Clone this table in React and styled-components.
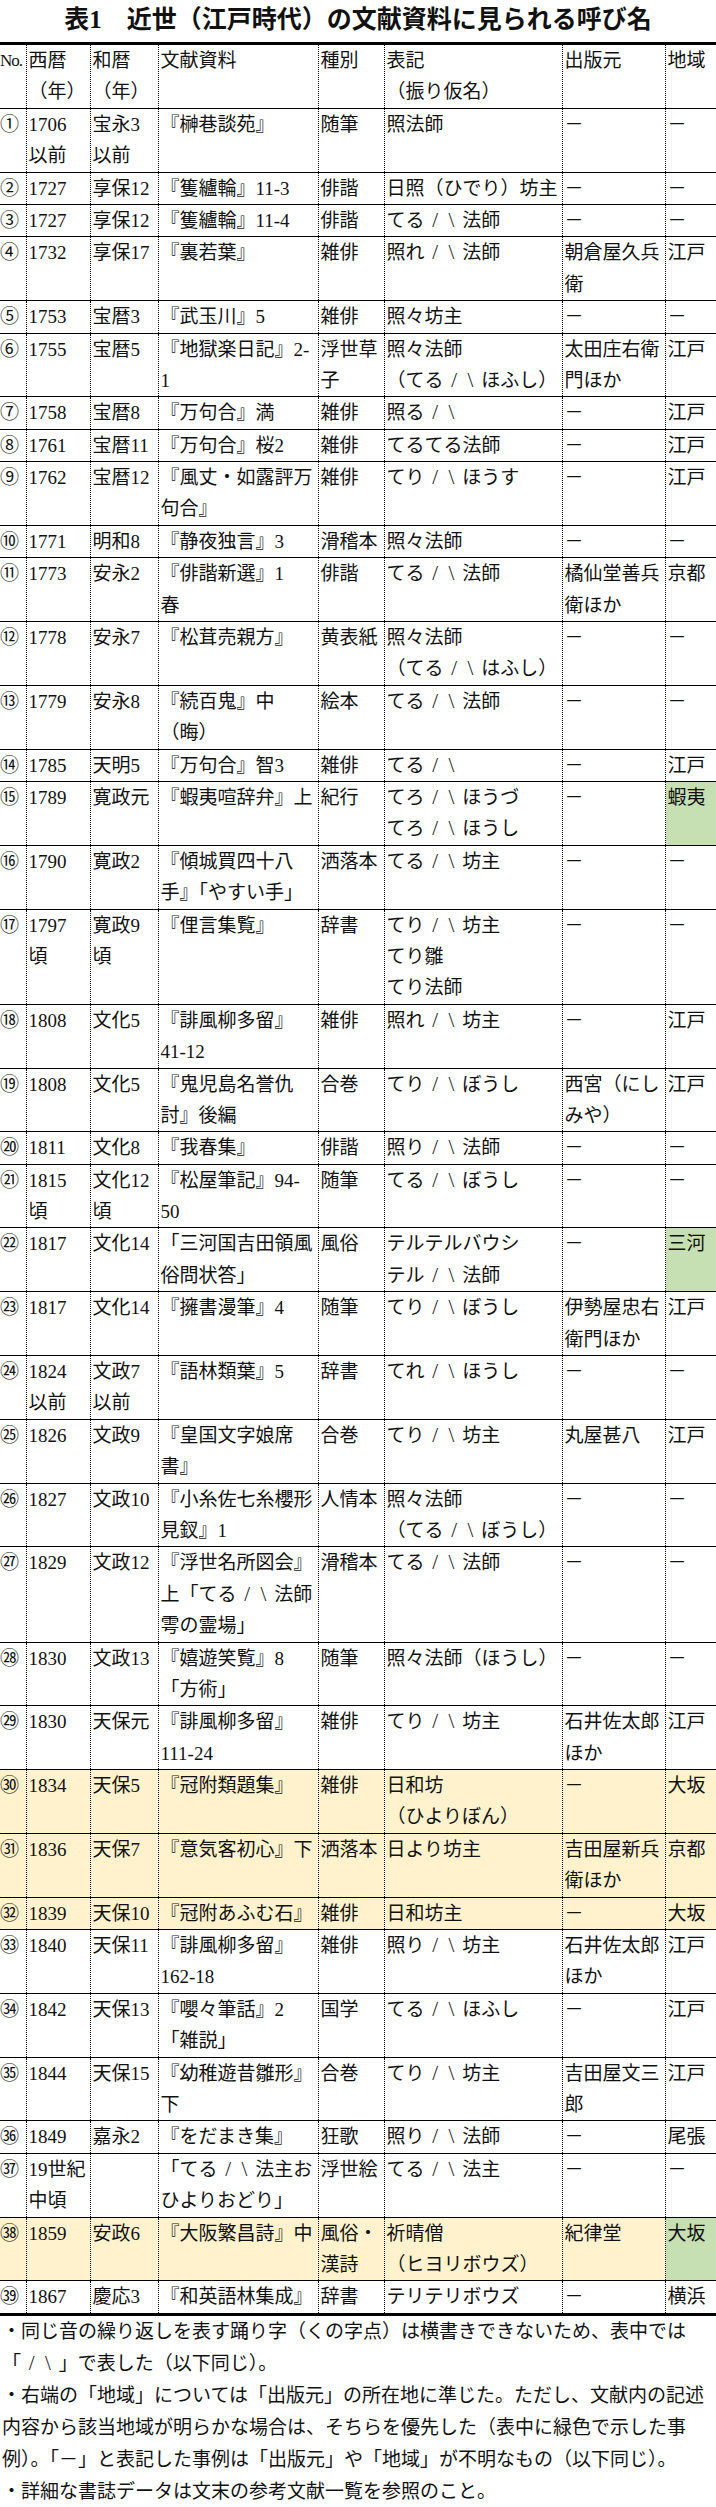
import React from "react";
import styled, { createGlobalStyle } from "styled-components";

const GlobalStyle = createGlobalStyle`
  body {
    margin: 0;
    background: #fff;
    color: #111;
    font-family: "Liberation Serif", "Noto Sans CJK JP", serif;
  }
`;

const columns = [26, 64, 68, 160, 66, 178, 103, 51];

const header = [
  "No.",
  "西暦\n（年）",
  "和暦\n（年）",
  "文献資料",
  "種別",
  "表記\n（振り仮名）",
  "出版元",
  "地域",
];

// no, west, wareki, source, kind, label, publisher, region, tone
const rows = [
  ["①", "1706\n以前", "宝永3\n以前", "『榊巷談苑』", "随筆", "照法師", "－", "－"],
  ["②", "1727", "享保12", "『篗纑輪』11-3", "俳諧", "日照（ひでり）坊主", "－", "－"],
  ["③", "1727", "享保12", "『篗纑輪』11-4", "俳諧", "てる／＼法師", "－", "－"],
  ["④", "1732", "享保17", "『裏若葉』", "雑俳", "照れ／＼法師", "朝倉屋久兵\n衛", "江戸"],
  ["⑤", "1753", "宝暦3", "『武玉川』5", "雑俳", "照々坊主", "－", "－"],
  ["⑥", "1755", "宝暦5", "『地獄楽日記』2-\n1", "浮世草\n子", "照々法師\n（てる／＼ほふし）", "太田庄右衛\n門ほか", "江戸"],
  ["⑦", "1758", "宝暦8", "『万句合』満", "雑俳", "照る／＼", "－", "江戸"],
  ["⑧", "1761", "宝暦11", "『万句合』桜2", "雑俳", "てるてる法師", "－", "江戸"],
  ["⑨", "1762", "宝暦12", "『風丈・如露評万\n句合』", "雑俳", "てり／＼ほうす", "－", "江戸"],
  ["⑩", "1771", "明和8", "『静夜独言』3", "滑稽本", "照々法師", "－", "－"],
  ["⑪", "1773", "安永2", "『俳諧新選』1\n春", "俳諧", "てる／＼法師", "橘仙堂善兵\n衛ほか", "京都"],
  ["⑫", "1778", "安永7", "『松茸売親方』", "黄表紙", "照々法師\n（てる／＼はふし）", "－", "－"],
  ["⑬", "1779", "安永8", "『続百鬼』中\n（晦）", "絵本", "てる／＼法師", "－", "－"],
  ["⑭", "1785", "天明5", "『万句合』智3", "雑俳", "てる／＼", "－", "江戸"],
  ["⑮", "1789", "寛政元", "『蝦夷喧辞弁』上", "紀行", "てろ／＼ほうづ\nてろ／＼ほうし", "－", "蝦夷", "green"],
  ["⑯", "1790", "寛政2", "『傾城買四十八\n手』「やすい手」", "洒落本", "てる／＼坊主", "－", "－"],
  ["⑰", "1797\n頃", "寛政9\n頃", "『俚言集覧』", "辞書", "てり／＼坊主\nてり雛\nてり法師", "－", "－"],
  ["⑱", "1808", "文化5", "『誹風柳多留』\n41-12", "雑俳", "照れ／＼坊主", "－", "江戸"],
  ["⑲", "1808", "文化5", "『鬼児島名誉仇\n討』後編", "合巻", "てり／＼ぼうし", "西宮（にし\nみや）", "江戸"],
  ["⑳", "1811", "文化8", "『我春集』", "俳諧", "照り／＼法師", "－", "－"],
  ["㉑", "1815\n頃", "文化12\n頃", "『松屋筆記』94-\n50", "随筆", "てる／＼ぼうし", "－", "－"],
  ["㉒", "1817", "文化14", "「三河国吉田領風\n俗問状答」", "風俗", "テルテルバウシ\nテル／＼法師", "－", "三河", "green"],
  ["㉓", "1817", "文化14", "『擁書漫筆』4", "随筆", "てり／＼ぼうし", "伊勢屋忠右\n衛門ほか", "江戸"],
  ["㉔", "1824\n以前", "文政7\n以前", "『語林類葉』5", "辞書", "てれ／＼ほうし", "－", "－"],
  ["㉕", "1826", "文政9", "『皇国文字娘席\n書』", "合巻", "てり／＼坊主", "丸屋甚八", "江戸"],
  ["㉖", "1827", "文政10", "『小糸佐七糸櫻形\n見釵』1", "人情本", "照々法師\n（てる／＼ぼうし）", "－", "－"],
  ["㉗", "1829", "文政12", "『浮世名所図会』\n上「てる／＼法師\n雩の霊場」", "滑稽本", "てる／＼法師", "－", "－"],
  ["㉘", "1830", "文政13", "『嬉遊笑覧』8\n「方術」", "随筆", "照々法師（ほうし）", "－", "－"],
  ["㉙", "1830", "天保元", "『誹風柳多留』\n111-24", "雑俳", "てり／＼坊主", "石井佐太郎\nほか", "江戸"],
  ["㉚", "1834", "天保5", "『冠附類題集』", "雑俳", "日和坊\n（ひよりぼん）", "－", "大坂", "cream"],
  ["㉛", "1836", "天保7", "『意気客初心』下", "洒落本", "日より坊主", "吉田屋新兵\n衛ほか", "京都", "cream"],
  ["㉜", "1839", "天保10", "『冠附あふむ石』", "雑俳", "日和坊主", "－", "大坂", "cream"],
  ["㉝", "1840", "天保11", "『誹風柳多留』\n162-18", "雑俳", "照り／＼坊主", "石井佐太郎\nほか", "江戸"],
  ["㉞", "1842", "天保13", "『嚶々筆話』2\n「雑説」", "国学", "てる／＼ほふし", "－", "江戸"],
  ["㉟", "1844", "天保15", "『幼稚遊昔雛形』\n下", "合巻", "てり／＼坊主", "吉田屋文三\n郎", "江戸"],
  ["㊱", "1849", "嘉永2", "『をだまき集』", "狂歌", "照り／＼法師", "－", "尾張"],
  ["㊲", "19世紀\n中頃", "", "「てる／＼法主お\nひよりおどり」", "浮世絵", "てる／＼法主", "－", "－"],
  ["㊳", "1859", "安政6", "『大阪繁昌詩』中", "風俗・\n漢詩", "祈晴僧\n（ヒヨリボウズ）", "紀律堂", "大坂", "both"],
  ["㊴", "1867", "慶応3", "『和英語林集成』", "辞書", "テリテリボウズ", "－", "横浜"],
];

const notes = [
  "・同じ音の繰り返しを表す踊り字（くの字点）は横書きできないため、表中では",
  "「／＼」で表した（以下同じ）。",
  "・右端の「地域」については「出版元」の所在地に準じた。ただし、文献内の記述",
  "内容から該当地域が明らかな場合は、そちらを優先した（表中に緑色で示した事",
  "例）。「－」と表記した事例は「出版元」や「地域」が不明なもの（以下同じ）。",
  "・詳細な書誌データは文末の参考文献一覧を参照のこと。",
];

const Page = styled.div`
  width: 716px;
  background: #fff;
`;

const Title = styled.h1`
  margin: 0;
  height: 42px;
  line-height: 40px;
  text-align: center;
  font-size: 25px;
  font-weight: 700;
  color: #111;
  white-space: pre;
`;

const Table = styled.table`
  width: 716px;
  border-collapse: collapse;
  table-layout: fixed;
  border-top: 3px solid #000;
  border-bottom: 3px solid #000;
`;

const Row = styled.tr`
  background: ${(p) => (p.$cream ? "#fff2cc" : "#fff")};
`;

const Cell = styled.td`
  padding: 0 0 0 2px;
  vertical-align: top;
  text-align: left;
  font-weight: 400;
  font-size: 19px;
  line-height: 31.4px;
  overflow: hidden;
  color: #111;
  border-bottom: 1px solid #000;
  border-left: ${(p) => (p.$first ? "none" : "1px dotted #000")};
  background: ${(p) => (p.$green ? "#c6e0b4" : "transparent")};
`;

const NoCell = styled(Cell)`
  padding: 0;
  font-size: ${(p) => (p.$head ? "17px" : "19px")};
  letter-spacing: ${(p) => (p.$head ? "-1px" : "0")};
`;

const Line = styled.div`
  white-space: nowrap;
  height: ${(p) => (p.$note ? "32px" : "31.4px")};
`;

/* the kunoji repeat mark written as two slanted strokes, one cell each */
const Odoriji = styled.span`
  display: inline-block;
  width: 1.8em;
  font-size: 1.1em;
  line-height: 1;
  vertical-align: baseline;
  text-align: center;
  font-family: "Liberation Serif", serif;
  white-space: pre;
  color: #222;
`;

const Notes = styled.div`
  padding: 0 0 0 2px;
  font-size: 19px;
  line-height: 32px;
  color: #111;
`;

const withOdoriji = (text) => {
  const parts = text.split("／＼");
  return parts.map((p, i) => (
    <React.Fragment key={i}>
      {p}
      {i < parts.length - 1 && <Odoriji>{"/\u2002\\"}</Odoriji>}
    </React.Fragment>
  ));
};

const Lines = ({ text }) =>
  text === ""
    ? null
    : text.split("\n").map((l, i) => <Line key={i}>{withOdoriji(l)}</Line>);

export default function App() {
  return (
    <Page>
      <GlobalStyle />
      <Title>表1　近世（江戸時代）の文献資料に見られる呼び名</Title>
      <Table>
        <colgroup>
          {columns.map((w, i) => (
            <col key={i} style={{ width: w }} />
          ))}
        </colgroup>
        <thead>
          <Row>
            {header.map((h, i) =>
              i === 0 ? (
                <NoCell as="th" key={i} $first $head>
                  <Lines text={h} />
                </NoCell>
              ) : (
                <Cell as="th" key={i}>
                  <Lines text={h} />
                </Cell>
              )
            )}
          </Row>
        </thead>
        <tbody>
          {rows.map((r) => {
            const tone = r[8];
            const cream = tone === "cream" || tone === "both";
            const green = tone === "green" || tone === "both";
            return (
              <Row key={r[0]} $cream={cream}>
                <NoCell $first>
                  <Lines text={r[0]} />
                </NoCell>
                {r.slice(1, 8).map((v, i) => (
                  <Cell key={i} $green={green && i === 6}>
                    <Lines text={v} />
                  </Cell>
                ))}
              </Row>
            );
          })}
        </tbody>
      </Table>
      <Notes>
        {notes.map((n, i) => (
          <Line key={i} $note>
            {withOdoriji(n)}
          </Line>
        ))}
      </Notes>
    </Page>
  );
}
